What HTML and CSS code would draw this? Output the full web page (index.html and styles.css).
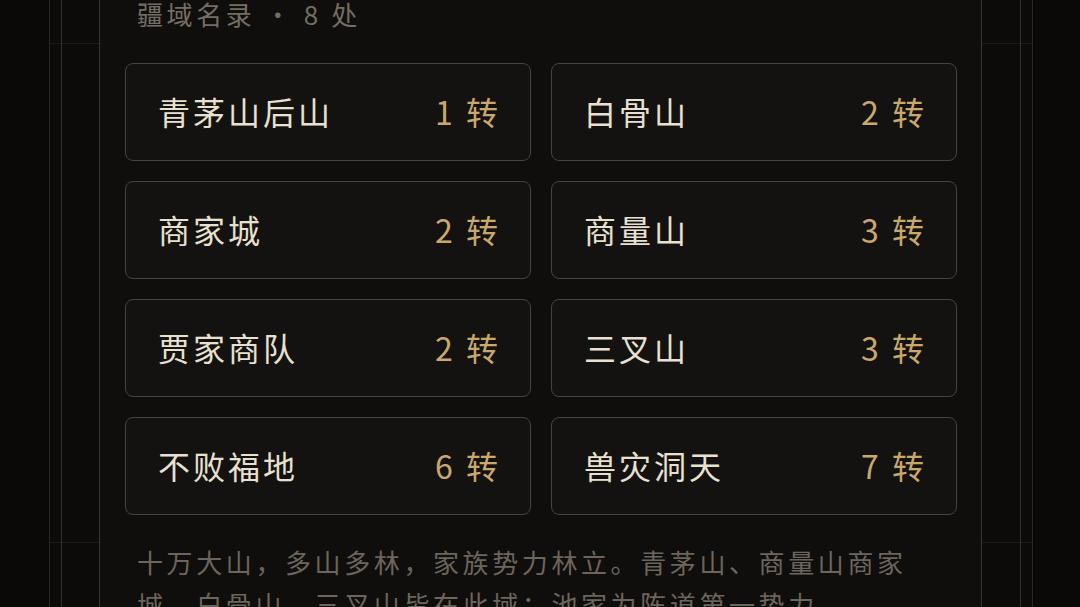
FILE: index.html
```html
<!DOCTYPE html>
<html lang="zh-CN">
<head>
<meta charset="utf-8">
<title>疆域名录</title>
<link rel="stylesheet" href="styles.css">
</head>
<body>
<div class="stage">
  <div class="rail-outer">
    <div class="rail-inner">
      <section class="panel">
        <h2 class="heading">疆域名录 · 8 处</h2>
        <div class="grid">
          <div class="card"><span class="name">青茅山后山</span><span class="tier">1 转</span></div>
          <div class="card"><span class="name">白骨山</span><span class="tier">2 转</span></div>
          <div class="card"><span class="name">商家城</span><span class="tier">2 转</span></div>
          <div class="card"><span class="name">商量山</span><span class="tier">3 转</span></div>
          <div class="card"><span class="name">贾家商队</span><span class="tier">2 转</span></div>
          <div class="card"><span class="name">三叉山</span><span class="tier">3 转</span></div>
          <div class="card"><span class="name">不败福地</span><span class="tier">6 转</span></div>
          <div class="card"><span class="name">兽灾洞天</span><span class="tier">7 转</span></div>
        </div>
        <p class="desc">十万大山，多山多林，家族势力林立。青茅山、商量山商家城、白骨山、三叉山皆在此域；池家为陈道第一势力。</p>
      </section>
    </div>
  </div>
</div>
</body>
</html>
```

FILE: styles.css
```css
html, body {
  margin: 0;
  padding: 0;
  background: #0a0908;
  width: 1080px;
  height: 607px;
  overflow: hidden;
  font-family: "Noto Sans CJK SC", "Noto Sans", sans-serif;
}

.stage {
  height: 607px;
  padding-left: 49px;
}

.rail-outer {
  width: 971px;
  height: 607px;
  border-left: 1px solid #2b2721;
  border-right: 1px solid #2b2721;
  background-color: #0c0b09;
  background-image:
    linear-gradient(to bottom, transparent 43px, #1d1a16 43px, #1d1a16 44px, transparent 44px),
    linear-gradient(to bottom, transparent 542px, #1d1a16 542px, #1d1a16 543px, transparent 543px);
  padding-left: 11px;
}

.rail-inner {
  width: 921px;
  height: 607px;
  border-left: 1px solid #36312a;
  border-right: 1px solid #36312a;
  padding-left: 37px;
}

.panel {
  width: 832px;
  height: 607px;
  border-left: 1px solid #3a352d;
  border-right: 1px solid #3a352d;
  background: #100e0c;
  padding: 0 24px 0 25px;
}

.heading {
  margin: 0;
  padding-left: 12px;
  height: 30px;
  line-height: 28px;
  font-size: 26px;
  font-weight: 400;
  letter-spacing: 3.6px;
  color: #746d64;
}

.grid {
  margin-top: 33px;
  display: grid;
  grid-template-columns: 1fr 1fr;
  column-gap: 20px;
  row-gap: 20px;
}

.card {
  box-sizing: border-box;
  height: 98px;
  border: 1px solid #48423a;
  border-radius: 8px;
  background: #141210;
  display: flex;
  align-items: center;
  justify-content: space-between;
  padding: 0 30px 3px 32px;
}

.name {
  font-size: 32px;
  letter-spacing: 3px;
  color: #e8e0d0;
}

.tier {
  font-size: 32px;
  letter-spacing: 2px;
  color: #c9a86c;
  word-spacing: 2px;
}

.desc {
  margin: 26px 0 0 0;
  padding: 0 36px 0 12px;
  font-size: 26px;
  line-height: 42px;
  letter-spacing: 3.6px;
  color: #6c655d;
}
```
